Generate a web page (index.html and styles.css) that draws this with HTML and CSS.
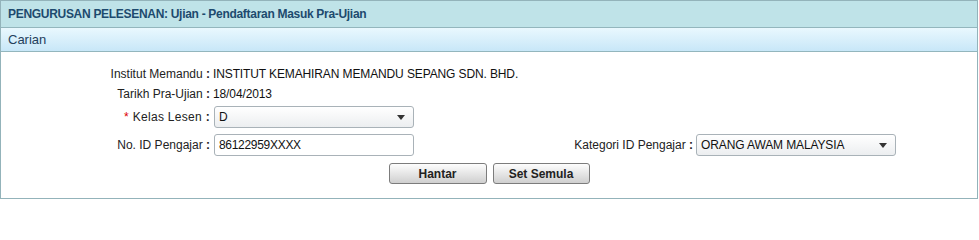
FILE: index.html
```html
<!DOCTYPE html>
<html>
<head>
<meta charset="utf-8">
<link rel="stylesheet" href="styles.css">
</head>
<body>
<div class="panel">
  <div class="title">PENGURUSAN PELESENAN: Ujian - Pendaftaran Masuk Pra-Ujian</div>
  <div class="subtitle">Carian</div>
  <div class="content">
    <div class="form">
      <div class="label r1">Institut Memandu <b>:</b></div>
      <div class="value r1 span">INSTITUT KEMAHIRAN MEMANDU SEPANG SDN. BHD.</div>

      <div class="label r2">Tarikh Pra-Ujian <b>:</b></div>
      <div class="value r2 span">18/04/2013</div>

      <div class="label r3 spaced"><span class="req">*</span> Kelas Lesen <b>:</b></div>
      <div class="value r3 span"><div class="select"><span>D</span><i class="arrow"></i></div></div>

      <div class="label r4">No. ID Pengajar <b>:</b></div>
      <div class="value r4"><div class="input">86122959XXXX</div></div>
      <div class="label r4">Kategori ID Pengajar <b>:</b></div>
      <div class="value r4"><div class="select last"><span>ORANG AWAM MALAYSIA</span><i class="arrow"></i></div></div>
    </div>
    <div class="buttons">
      <button class="btn w1">Hantar</button>
      <button class="btn w2">Set Semula</button>
    </div>
  </div>
</div>
</body>
</html>
```

FILE: styles.css
```css
html, body {
  margin: 0;
  padding: 0;
  background: #ffffff;
}
body {
  font-family: "Liberation Sans", Arial, sans-serif;
  font-size: 12px;
  color: #222;
}
.panel {
  width: 976px;
  height: 197px;
  border: 1px solid #93b3ba;
  display: flex;
  flex-direction: column;
}
.title {
  height: 26px;
  line-height: 26px;
  background: #bfe3e8;
  border-bottom: 1px solid #93b6bd;
  color: #1d4a6e;
  font-weight: bold;
  letter-spacing: -0.3px;
  padding-left: 7px;
}
.subtitle {
  height: 23px;
  line-height: 23px;
  background: linear-gradient(#e9f8fe, #c8e7f8);
  border-bottom: 1px solid #93b6bd;
  color: #24405c;
  font-size: 13px;
  padding-left: 7px;
}
.content {
  flex: 1;
  padding-top: 12px;
}
.form {
  display: grid;
  grid-template-columns: 209px 349px 128px 1fr;
  grid-template-rows: 20px 20px 26px 30px;
  column-gap: 3px;
  align-items: center;
}
.label {
  text-align: right;
  color: #222;
  white-space: nowrap;
}
.label b {
  font-weight: bold;
  color: #222;
}
.spaced {
  letter-spacing: 0.3px;
}
.req {
  color: #d00;
}
.value {
  color: #111;
  white-space: nowrap;
  letter-spacing: -0.12px;
}
.span {
  grid-column: 2 / 5;
}
.select, .input {
  box-sizing: border-box;
  width: 200px;
  height: 22px;
  border: 1px solid #a9b2b8;
  border-radius: 3px;
  padding-left: 4px;
  display: flex;
  align-items: center;
  position: relative;
  color: #111;
  margin-left: 1px;
}
.select.last {
  margin-left: 0;
}
.select {
  background: linear-gradient(#ffffff, #eceef0);
}
.input {
  background: #ffffff;
  letter-spacing: -0.3px;
}
.arrow {
  position: absolute;
  right: 8px;
  top: 8px;
  width: 0;
  height: 0;
  border-left: 4px solid transparent;
  border-right: 4px solid transparent;
  border-top: 5px solid #333;
}
.buttons {
  display: flex;
  justify-content: center;
  gap: 6px;
  margin-top: 3px;
}
.btn {
  height: 21px;
  border: 1px solid #7c7c7c;
  border-radius: 3px;
  background: linear-gradient(#fdfdfd, #e4e4e4 55%, #cfcfcf);
  font-family: "Liberation Sans", Arial, sans-serif;
  font-size: 12px;
  font-weight: bold;
  color: #222;
  padding: 0;
}
.w1 { width: 98px; }
.w2 { width: 97px; }
```
